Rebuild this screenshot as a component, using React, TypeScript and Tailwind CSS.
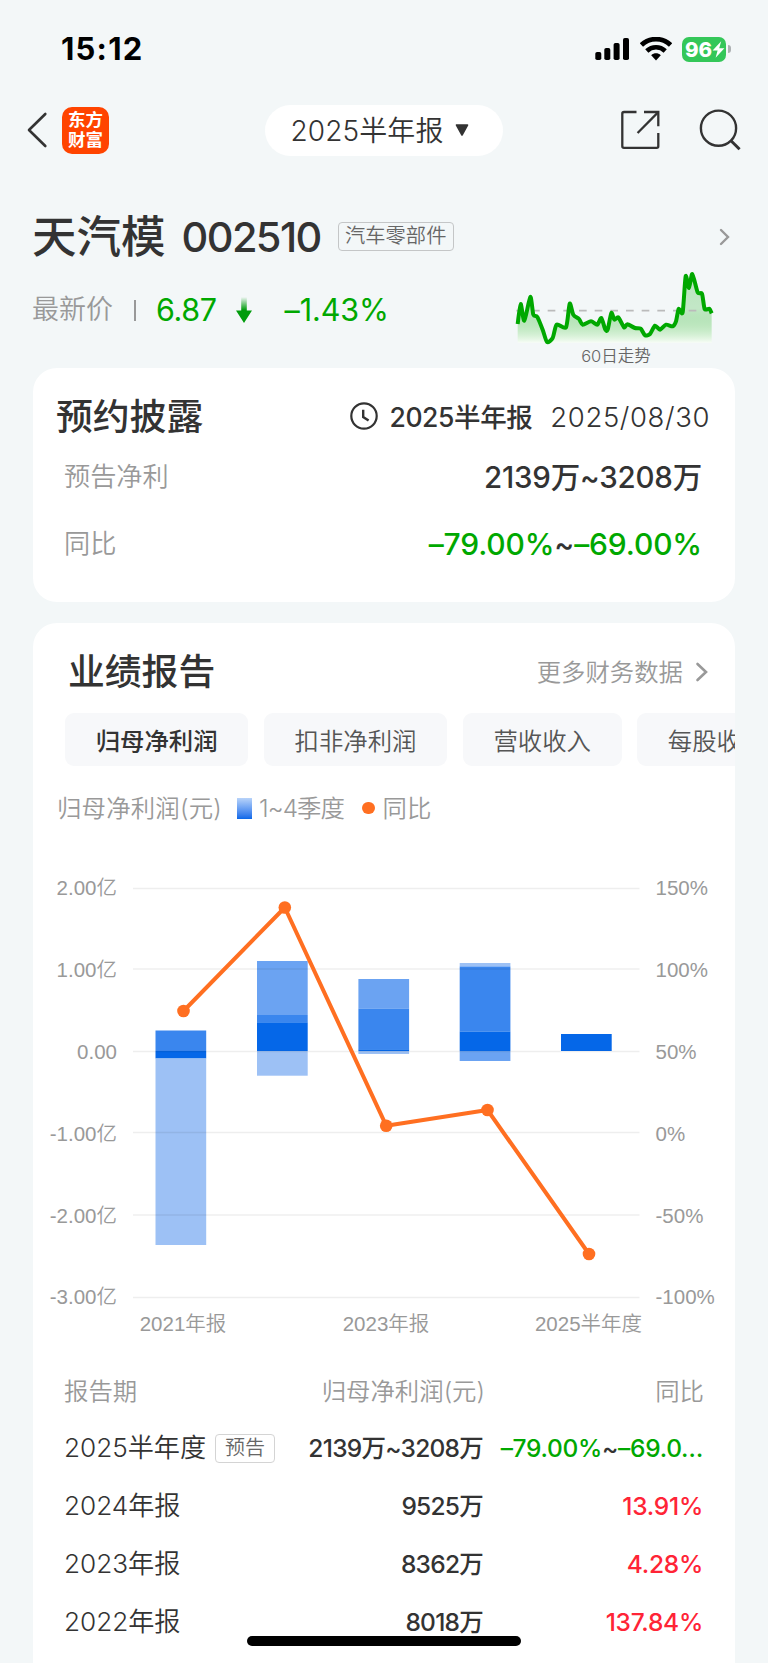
import React from "react";

const TREND: [number, number][] = [
  [353, 403], [362, 343], [373, 393], [391, 322], [400, 375], [412, 382], [428, 420], [441, 457], [458, 445],
  [470, 405], [498, 413], [509, 342], [520, 375], [537, 388], [548, 405], [573, 395], [592, 405], [604, 385],
  [616, 420], [623, 420], [634, 370], [643, 390], [655, 383], [672, 413], [682, 404], [705, 415], [722, 417],
  [735, 437], [750, 433], [765, 408], [780, 420], [798, 405], [818, 410], [828, 395], [836, 358], [848, 368],
  [857, 260], [867, 295], [877, 253], [893, 308], [906, 312], [914, 358], [928, 357], [935, 371],
];

function smooth(points: [number, number][]) {
  const k = 0.12;
  let d = `M${points[0][0]} ${points[0][1]}`;
  for (let i = 0; i < points.length - 1; i++) {
    const a = points[Math.max(i - 1, 0)];
    const b = points[i];
    const c = points[i + 1];
    const e = points[Math.min(i + 2, points.length - 1)];
    d += `C${b[0] + (c[0] - a[0]) * k} ${b[1] + (c[1] - a[1]) * k} ${c[0] - (e[0] - b[0]) * k} ${c[1] - (e[1] - b[1]) * k} ${c[0]} ${c[1]}`;
  }
  return d;
}

function StatusBar() {
  return (
    <div className="flex h-[92px] items-center justify-between pl-[61px] pr-[37px] pt-[6px]">
      <span className="text-[31px] leading-[40px] font-bold tracking-[1.2px] text-black">15:12</span>
      <div className="flex items-center">
        <svg width="35" height="24" viewBox="0 0 35 24" className="mr-[10px]">
          <rect x="0.3" y="15" width="6" height="8" rx="1.8" />
          <rect x="9.3" y="11" width="6" height="12" rx="1.8" />
          <rect x="18.6" y="6" width="6" height="17" rx="1.8" />
          <rect x="28" y="1" width="6" height="22" rx="1.8" />
        </svg>
        <svg width="32" height="24" viewBox="0 0 32 24" className="mr-[10px]">
          <path d="M1.4 8C9.6 .2 22.4 .2 30.6 8" fill="none" stroke="#000" strokeWidth="4.8" />
          <path d="M6.8 14C12 9 20 9 25.2 14" fill="none" stroke="#000" strokeWidth="4.6" />
          <path d="M11.2 18.3C14 15.7 18 15.7 20.8 18.3L16 23.4Z" />
        </svg>
        <div className="flex items-center gap-[2px]">
          <div className="flex h-[25px] w-[44px] items-center rounded-[7px] bg-[#34c759] pl-[3px]">
            <span className="text-[20.5px] leading-[25px] font-extrabold text-white">96</span>
            <svg width="13" height="17" viewBox="0 0 13 17" className="shrink-0">
              <path d="M9.2 .3L.6 9.4H5.6L3.6 16.8L12.4 7.2H7.2Z" fill="#fff" />
            </svg>
          </div>
          <div className="h-[8px] w-[3px] rounded-r-full bg-[#adb1b3]" />
        </div>
      </div>
    </div>
  );
}

function NavBar() {
  return (
    <div className="grid h-[76px] grid-cols-[1fr_238px_1fr] items-center text-[#333]">
      <div className="flex items-center pl-[26px]">
        <svg width="22" height="38" viewBox="0 0 22 38" fill="none" stroke="#333" strokeWidth="2.6" strokeLinecap="round" strokeLinejoin="round">
          <path d="M19.3 3L3 19L19.3 35" />
        </svg>
        <div className="ml-[14px] flex h-[47px] w-[47px] flex-col items-center justify-center rounded-[10px] bg-[#ff4400] text-[17.5px] leading-[20px] font-bold text-white">
          <span>东方</span>
          <span>财富</span>
        </div>
      </div>
      <div className="flex h-[51px] items-center justify-center rounded-full bg-white pt-[1px] pr-[9px] text-[28px] leading-[40px] font-[350]">
        <span className="tracking-[0.1px]">2025</span>
        <span className="tracking-[0.1px]">半年报</span>
        <svg width="14" height="13" viewBox="0 0 14 13" className="ml-[11px]">
          <path d="M1.5 1H12.5L7 11Z" fill="#333" stroke="#333" strokeWidth="1.6" strokeLinejoin="round" />
        </svg>
      </div>
      <div className="flex items-center justify-end gap-[37px] pr-[27px]">
        <svg width="42" height="42" viewBox="0 0 42 42" fill="none" stroke="#333" strokeWidth="2.3">
          <path d="M16.5 3H4Q2.3 3 2.3 4.7V37.2Q2.3 38.8 4 38.8H36.7Q38.3 38.8 38.3 37.2V24" />
          <path d="M24 3H38.3V17.2" />
          <path d="M38 3.4L17.6 24" />
        </svg>
        <svg width="42" height="42" viewBox="0 0 42 42" fill="none" stroke="#333" strokeWidth="2.4">
          <circle cx="19.5" cy="19.2" r="17.6" />
          <path d="M32 31.8L40.6 40.3" strokeWidth="3" />
        </svg>
      </div>
    </div>
  );
}

function StockHeader() {
  return (
    <div className="flex h-[200px] flex-col pt-[44px] pr-[38px] pl-[32px]">
      <div className="flex h-[50px] items-center">
        <span className="text-[44.5px] leading-[50px] font-medium text-[#333]">天汽模</span>
        <span className="ml-[16px] text-[41.5px] leading-[50px] font-medium tracking-[-1.6px] text-[#333]">002510</span>
        <span className="mb-[2px] ml-[17px] flex h-[29px] w-[116px] items-center justify-center rounded-[4px] border-[1.5px] border-[#c4c6c7] text-[20.3px] leading-[26px] font-[350] text-[#666]">
          汽车零部件
        </span>
        <svg width="11" height="18" viewBox="0 0 11 18" className="ml-auto" fill="none" stroke="#999" strokeWidth="2.4" strokeLinecap="round">
          <path d="M2 2L9 9L2 16" />
        </svg>
      </div>
      <div className="flex">
        <div className="mt-[28px] flex h-[40px] items-center text-[#00a800]">
          <span className="text-[27px] leading-[40px] font-[350] text-[#999]">最新价</span>
          <span className="ml-[21px] h-[21px] w-[2px] bg-[#999]" />
          <span className="ml-[20px] text-[30.5px] leading-[40px] tracking-[-0.4px]">6.87</span>
          <svg width="18" height="28" viewBox="0 0 18 28" className="ml-[18px]">
            <defs>
              <linearGradient id="arrow" x1="0" y1="0" x2="0" y2="1">
                <stop offset="0" stopColor="#009c0c" stopOpacity="0" />
                <stop offset="0.5" stopColor="#009c0c" />
              </linearGradient>
            </defs>
            <path d="M6.2 1H11.8V14.5H17L9 27L1 14.5H6.2Z" fill="url(#arrow)" />
          </svg>
          <span className="ml-[32px] text-[30.5px] leading-[40px] tracking-[-0.1px]">–1.43%</span>
        </div>
        <div className="mt-[9px] mr-[15px] ml-auto flex w-[200px] flex-col items-center">
          <svg width="200" height="74" viewBox="345 244 600 222">
            <defs>
              <linearGradient id="trend" x1="0" y1="0" x2="0" y2="1">
                <stop offset="0" stopColor="#00a800" stopOpacity="0.24" />
                <stop offset="0.5" stopColor="#00a800" stopOpacity="0.2" />
                <stop offset="1" stopColor="#f8fff4" stopOpacity="0.7" />
              </linearGradient>
            </defs>
            <path d={smooth(TREND) + "L935 459L353 459Z"} fill="url(#trend)" />
            <path d="M349 363H940" stroke="#bbb" strokeWidth="5" strokeDasharray="23 24" />
            <path d={smooth(TREND)} fill="none" stroke="#00a800" strokeWidth="12" strokeLinejoin="round" />
          </svg>
          <span className="-mt-[1px] ml-[2px] text-[16.5px] leading-[24px] font-[350] whitespace-nowrap text-[#666]">60日走势</span>
        </div>
      </div>
    </div>
  );
}

function DisclosureCard() {
  return (
    <section className="h-[234px] rounded-[24px] bg-white pt-[25px] pr-[33px] pl-[31px]">
      <div className="-mr-[8px] -ml-[8px] flex h-[48px] items-center text-[#333]">
        <h2 className="text-[36.8px] leading-[48px] font-medium">预约披露</h2>
        <svg width="28" height="28" viewBox="0 0 28 28" className="mb-[2px] ml-auto" fill="none" stroke="#333" strokeWidth="2.2">
          <circle cx="14" cy="14" r="12.7" />
          <path d="M13.2 7.8V15L18.6 18.6" strokeWidth="2.4" />
        </svg>
        <span className="ml-[11px] text-[26.5px] leading-[40px] font-medium tracking-[-0.4px]">2025半年报</span>
        <span className="ml-[18px] text-[27.5px] leading-[40px] font-light tracking-[0.6px]">2025/08/30</span>
      </div>
      <div className="mt-[16px] flex h-[40px] items-center justify-between">
        <span className="text-[26.2px] leading-[40px] font-[350] text-[#999]">预告净利</span>
        <span className="text-[29.5px] leading-[40px] font-medium tracking-[-0.2px] text-[#333]">2139万~3208万</span>
      </div>
      <div className="mt-[27px] flex h-[40px] items-center justify-between">
        <span className="text-[26.2px] leading-[40px] font-[350] text-[#999]">同比</span>
        <span className="text-[30px] leading-[40px] font-medium tracking-[-0.15px] text-[#00a800]">
          –79.00%<span className="text-[#333]">~</span>–69.00%
        </span>
      </div>
    </section>
  );
}

const TABS = ["归母净利润", "扣非净利润", "营收收入", "每股收益"];

const C1 = "#0567e8";
const C2 = "#3a86ee";
const C3 = "#6ba3f2";
const C4 = "#9dc1f5";

const BARS: { x: number; parts: [number, number, string][] }[] = [
  { x: 155.5, parts: [[1030.5, 1051, C2], [1051, 1058.5, C1], [1058.5, 1245, C4]] },
  { x: 257, parts: [[961, 1015, C3], [1015, 1022.3, C2], [1022.3, 1051, C1], [1051, 1075.7, C4]] },
  { x: 358.4, parts: [[979, 1008.5, C3], [1008.5, 1049.3, C2], [1049.3, 1051, C1], [1051, 1054, C4]] },
  { x: 459.7, parts: [[963, 966.5, C4], [966.5, 1031.5, C2], [1031.5, 1051, C1], [1051, 1061, C3]] },
  { x: 561, parts: [[1034, 1051, C1]] },
];

const GRID: [number, string, string][] = [
  [888.5, "2.00亿", "150%"],
  [969, "1.00亿", "100%"],
  [1051.5, "0.00", "50%"],
  [1132.5, "-1.00亿", "0%"],
  [1215, "-2.00亿", "-50%"],
  [1297.5, "-3.00亿", "-100%"],
];

const RATE: [number, number][] = [[183.5, 1011], [284.8, 907.5], [386.2, 1125.7], [487.5, 1110], [589, 1254]];

function Chart() {
  return (
    <svg
      width="702"
      height="500"
      viewBox="33 850 702 500"
      className="block font-['Liberation_Sans','Noto_Sans_CJK_SC',sans-serif] font-[350]"
      fill="#999"
      fontSize="20.5"
    >
      {BARS.map((bar) =>
        bar.parts.map(([top, bottom, color]) => (
          <rect key={`${bar.x}-${top}`} x={bar.x} y={top} width="50.7" height={bottom - top} fill={color} />
        )),
      )}
      {GRID.map(([y, left, right], i) => (
        <g key={left}>
          <path d={`M133 ${y}H639.5`} stroke="#000" strokeOpacity="0.065" strokeWidth="1.6" />
          <text x="117" y={895.4 + i * 81.8} textAnchor="end">{left}</text>
          <text x="655.5" y={895.4 + i * 81.8}>{right}</text>
        </g>
      ))}
      <polyline points={RATE.map((p) => p.join(",")).join(" ")} fill="none" stroke="#ff6f21" strokeWidth="4" strokeLinejoin="round" />
      {RATE.map(([x, y]) => (
        <circle key={x} cx={x} cy={y} r="6.3" fill="#ff6f21" />
      ))}
      <text x="183" y="1330.5" textAnchor="middle">2021年报</text>
      <text x="386" y="1330.5" textAnchor="middle">2023年报</text>
      <text x="588.5" y="1330.5" textAnchor="middle">2025半年度</text>
    </svg>
  );
}

const ROWS: { period: string; profit: string; rate: React.ReactNode; down?: boolean; notice?: boolean }[] = [
  {
    period: "2025半年度",
    profit: "2139万~3208万",
    rate: <>–79.00%<span className="text-[#333]">~</span>–69.0…</>,
    down: true,
    notice: true,
  },
  { period: "2024年报", profit: "9525万", rate: "13.91%" },
  { period: "2023年报", profit: "8362万", rate: "4.28%" },
  { period: "2022年报", profit: "8018万", rate: "137.84%" },
];

function ReportCard() {
  return (
    <section className="mt-[21px] h-[1060px] overflow-hidden rounded-t-[24px] bg-white">
      <div className="mt-[25px] flex h-[48px] items-center justify-between pr-[27px] pl-[35px]">
        <h2 className="text-[36.8px] leading-[48px] font-medium text-[#333]">业绩报告</h2>
        <div className="flex items-center gap-[12px] text-[24.4px] leading-[36px] font-[350] text-[#999]">
          更多财务数据
          <svg width="13" height="20" viewBox="0 0 13 20" fill="none" stroke="#999" strokeWidth="2.6" strokeLinecap="round">
            <path d="M2.5 2L11 10L2.5 18" />
          </svg>
        </div>
      </div>
      <div className="mt-[17px] ml-[32px] flex gap-[15.5px] overflow-hidden">
        {TABS.map((tab, i) => (
          <div
            key={tab}
            className={
              i === 0
                ? "flex h-[53px] shrink-0 items-center rounded-[9px] bg-[#f7f8fa] px-[30.7px] pt-[4px] text-[24.4px] font-medium text-[#333]"
                : "flex h-[53px] shrink-0 items-center rounded-[9px] bg-[#f7f8fa] px-[30.7px] pt-[4px] text-[24.4px] font-[350] text-[#555]"
            }
          >
            {tab}
          </div>
        ))}
      </div>
      <div className="mt-[24px] flex h-[36px] items-center pl-[24px] text-[24.4px] leading-[36px] font-[350] text-[#999]">
        <span className="tracking-[0.2px]">归母净利润(元)</span>
        <span className="ml-[15px] h-[21px] w-[15px] bg-gradient-to-b from-[#b8d3f9] to-[#0567e8]" />
        <span className="ml-[7px] tracking-[-0.9px]">1~4季度</span>
        <span className="ml-[18px] h-[12.5px] w-[12.5px] rounded-full bg-[#ff6f21]" />
        <span className="ml-[8px]">同比</span>
      </div>
      <div className="mt-[24px]">
        <Chart />
      </div>
      <div className="mt-[23px] grid h-[36px] grid-cols-[1fr_200px_219px] items-center pr-[31px] pl-[31px] text-[24.4px] leading-[36px] font-[350] text-[#999]">
        <span>报告期</span>
        <span className="text-right">归母净利润(元)</span>
        <span className="text-right">同比</span>
      </div>
      <div className="mt-[10px]">
        {ROWS.map((row) => (
          <div key={row.period} className="grid h-[58px] grid-cols-[1fr_200px_220px] items-center pr-[32px] pl-[31px] text-[24.5px] leading-[40px] font-medium whitespace-nowrap text-[#333]">
            <div className="flex items-center">
              <span className="text-[26.2px] font-[350] tracking-[-0.05px]">{row.period}</span>
              {row.notice && (
                <span className="ml-[9px] flex h-[29px] w-[60px] items-center justify-center rounded-[4px] border-[1.5px] border-[#d4d4d4] text-[20px] leading-[26px] font-[350] text-[#666]">
                  预告
                </span>
              )}
            </div>
            <span className="text-right tracking-[-0.75px]">{row.profit}</span>
            <span className={row.down ? "text-right tracking-[-0.3px] text-[#00a800]" : "text-right tracking-[-0.25px] text-[#ff2436]"}>
              {row.rate}
            </span>
          </div>
        ))}
      </div>
    </section>
  );
}

export default function App() {
  return (
    <div className="relative h-[1663px] w-[768px] overflow-hidden bg-[#f3f7f8] font-['Inter','Noto_Sans_CJK_SC',sans-serif]">
      <StatusBar />
      <NavBar />
      <StockHeader />
      <main className="px-[33px]">
        <DisclosureCard />
        <ReportCard />
      </main>
      <div className="absolute bottom-[17px] left-[247px] h-[10px] w-[274px] rounded-full bg-black" />
    </div>
  );
}
